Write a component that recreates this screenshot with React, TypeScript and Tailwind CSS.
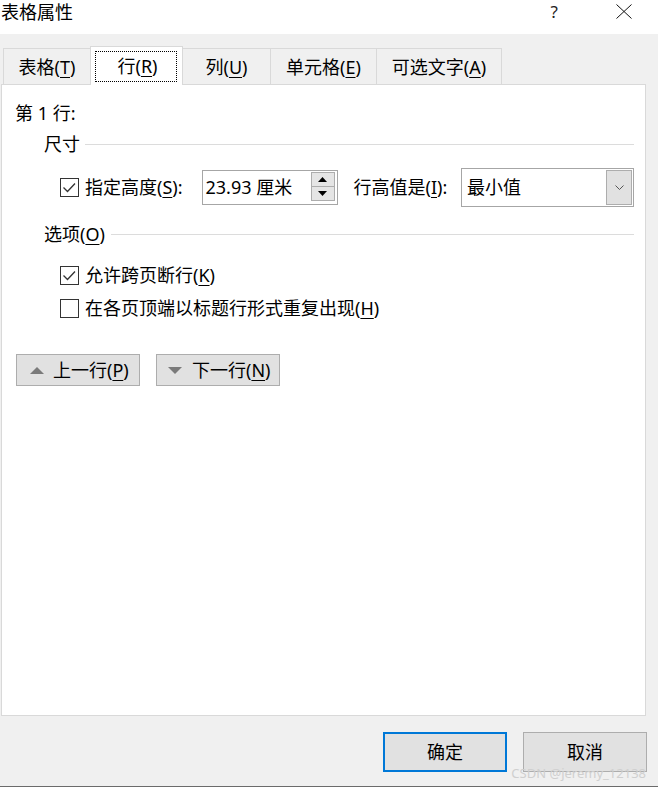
import React from "react";

const FONT = { fontFamily: '"Noto Sans", "Noto Sans CJK SC", sans-serif' };

// access key: letter with underline
const K = ({ c }: { c: string }) => (
  <>
    (<u className="underline-offset-[3px] decoration-1">{c}</u>)
  </>
);

const CheckBox = ({ checked }: { checked: boolean }) => (
  <div className="w-[19px] h-[19px] border border-[#333333] bg-white flex items-center justify-center shrink-0">
    {checked && (
      <svg width="17" height="17" viewBox="0 0 17 17">
        <path d="M2.5 8.5 L6.5 12.5 L14 4.5" fill="none" stroke="#333333" strokeWidth="1.3" />
      </svg>
    )}
  </div>
);

const Tab = ({ label, w, active }: { label: React.ReactNode; w: string; active?: boolean }) =>
  active ? (
    <div className={`${w} h-[39px] -ml-px -mb-px relative z-10 bg-white border border-b-0 border-[#d9d9d9] flex items-center justify-center`}>
      <div className="absolute left-[4px] right-[5px] top-[4px] bottom-[3px] border border-dotted border-black" />
      <span className="pl-[2px]">{label}</span>
    </div>
  ) : (
    <div className={`${w} h-[36px] -ml-px bg-[#f0f0f0] border border-b-0 border-[#d9d9d9] flex items-center justify-center`}>
      {label}
    </div>
  );

export default function App() {
  return (
    <div
      style={FONT}
      className="w-[658px] h-[787px] bg-[#f0f0f0] border-b border-[#6b6b6b] flex flex-col text-[18px] leading-[26px] text-black whitespace-nowrap relative overflow-hidden"
    >
      {/* title bar */}
      <div className="h-[34px] bg-white flex items-start">
        <span className="pl-[1px] leading-[24px]">表格属性</span>
        <span className="ml-auto leading-[24px] text-[17px] text-[#222]">?</span>
        <div className="ml-[58px] mr-[26px] mt-[4px]">
          <svg width="16" height="15" viewBox="0 0 16 15">
            <path d="M0.5 0.5 L15.5 14.5 M15.5 0.5 L0.5 14.5" stroke="#111" strokeWidth="1" />
          </svg>
        </div>
      </div>

      {/* tabs */}
      <div className="mt-[12px] pl-[4px] flex items-end">
        <Tab w="w-[88px]" label={<>表格<K c="T" /></>} />
        <Tab w="w-[93px]" active label={<>行<K c="R" /></>} />
        <Tab w="w-[89px]" label={<>列<K c="U" /></>} />
        <Tab w="w-[107px]" label={<>单元格<K c="E" /></>} />
        <Tab w="w-[126px]" label={<>可选文字<K c="A" /></>} />
      </div>

      {/* panel */}
      <div className="ml-[1px] w-[645px] h-[632px] border border-[#d9d9d9] bg-white pl-[13px] pr-[11px] pt-[15px] flex flex-col">
        <div className="h-[26px] flex items-center">第 1 行:</div>

        <div className="mt-[5px] h-[26px] flex items-center ml-[29px]">
          <span>尺寸</span>
          <div className="flex-1 h-px bg-[#dcdcdc] ml-[5px]" />
        </div>

        <div className="mt-[10px] h-[40px] flex items-center ml-[45px]">
          <CheckBox checked />
          <span className="ml-[6px] shrink-0">指定高度<K c="S" />:</span>
          <div className="ml-[19px] w-[136px] h-[35px] shrink-0 border border-[#a6a6a6] flex items-center pl-[3px] pr-[2px]">
            <span>23.93 厘米</span>
            <div className="ml-auto w-[24px] h-[30px] flex flex-col">
              <div className="h-[15px] bg-[#e5e5e5] border border-[#adadad] flex items-center justify-center">
                <svg width="9" height="5" viewBox="0 0 9 5"><path d="M0 5 L4.5 0 L9 5 Z" fill="#000" /></svg>
              </div>
              <div className="h-[15px] -mt-px bg-[#e5e5e5] border border-[#adadad] flex items-center justify-center">
                <svg width="9" height="5" viewBox="0 0 9 5"><path d="M0 0 L4.5 5 L9 0 Z" fill="#000" /></svg>
              </div>
            </div>
          </div>
          <span className="ml-[16px] shrink-0">行高值是<K c="I" />:</span>
          <div className="ml-auto w-[173px] h-[39px] shrink-0 border border-[#a6a6a6] flex items-center pl-[5px] pr-[1px]">
            <span>最小值</span>
            <div className="ml-auto w-[26px] h-[35px] bg-[#e1e1e1] border border-[#adadad] flex items-center justify-center">
              <svg width="9" height="5" viewBox="0 0 9 5">
                <path d="M0.5 0.5 L4.5 4.5 L8.5 0.5" fill="none" stroke="#555" strokeWidth="1" />
              </svg>
            </div>
          </div>
        </div>

        <div className="mt-[14px] h-[26px] flex items-center ml-[29px]">
          <span>选项<K c="O" /></span>
          <div className="flex-1 h-px bg-[#dcdcdc] ml-[6px]" />
        </div>

        <div className="mt-[15px] h-[26px] flex items-center ml-[45px]">
          <CheckBox checked />
          <span className="ml-[6px]">允许跨页断行<K c="K" /></span>
        </div>

        <div className="mt-[7px] h-[26px] flex items-center ml-[45px]">
          <CheckBox checked={false} />
          <span className="ml-[6px]">在各页顶端以标题行形式重复出现<K c="H" /></span>
        </div>

        <div className="mt-[33px] flex gap-[16px] ml-[1px]">
          <div className="w-[124px] h-[32px] bg-[#e1e1e1] border border-[#adadad] flex items-center pl-[13px]">
            <svg width="14" height="7" viewBox="0 0 14 7"><path d="M0 7 L7 0 L14 7 Z" fill="#7a7a7a" /></svg>
            <span className="ml-[9px]">上一行<K c="P" /></span>
          </div>
          <div className="w-[124px] h-[32px] bg-[#e1e1e1] border border-[#adadad] flex items-center pl-[11px]">
            <svg width="14" height="7" viewBox="0 0 14 7"><path d="M0 0 L7 7 L14 0 Z" fill="#7a7a7a" /></svg>
            <span className="ml-[10px]">下一行<K c="N" /></span>
          </div>
        </div>
      </div>

      {/* bottom buttons */}
      <div className="mt-[16px] flex gap-[16px] pl-[383px]">
        <div className="w-[124px] h-[40px] bg-[#e1e1e1] border-2 border-[#0078d7] flex items-center justify-center">确定</div>
        <div className="w-[124px] h-[40px] bg-[#e1e1e1] border border-[#adadad] flex items-center justify-center">取消</div>
      </div>

      <span className="absolute right-[12px] bottom-[5px] text-[13px] leading-[16px] text-[#cfcfcf]">CSDN @jeremy_12138</span>
    </div>
  );
}
